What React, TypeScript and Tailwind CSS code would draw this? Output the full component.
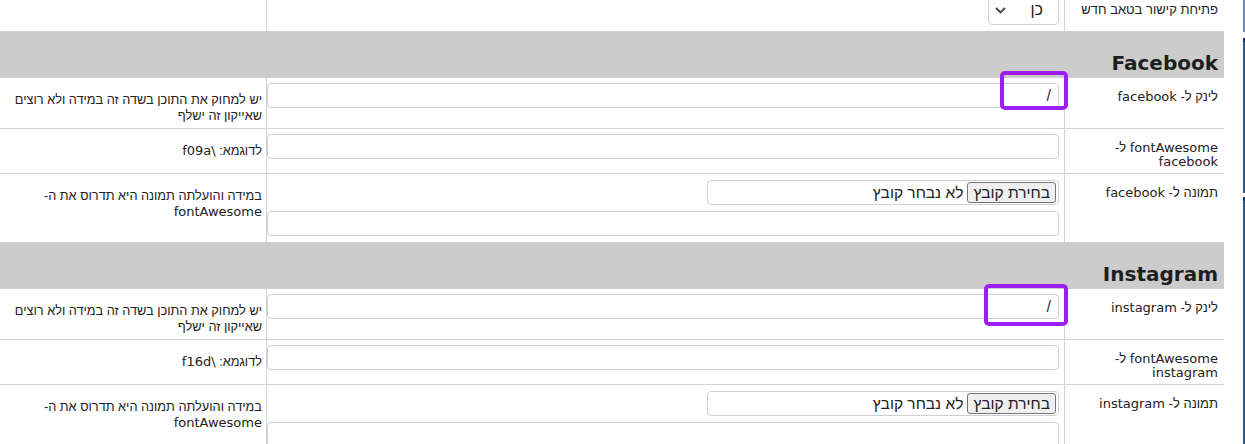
import type { ReactNode } from 'react';

const sections = [
    { title: 'Facebook', name: 'facebook', code: '\\f09a' },
    { title: 'Instagram', name: 'instagram', code: '\\f16d' },
];

function Lat({ children }: { children: ReactNode }) {
    return <span className="font-['DejaVu_Sans',sans-serif] text-[13px]">{children}</span>;
}

function Row({
    height,
    label,
    desc,
    children,
    last,
}: {
    height: string;
    label: ReactNode;
    desc?: ReactNode;
    children?: ReactNode;
    last?: boolean;
}) {
    return (
        <div className={`flex ${height} ${last ? '' : 'border-b border-[#d4d4d4]'}`}>
            <div className="w-[160px] shrink-0 border-l border-[#d4d4d4] pr-[6px] pt-[12px] leading-[14px]">{label}</div>
            <div className="w-[798px] shrink-0 border-l border-[#d4d4d4] pr-[5px] pt-[5px]">{children}</div>
            <div className="w-[266px] shrink-0 pr-[4px] pt-[14px] leading-[16px] text-[12.75px]">{desc}</div>
        </div>
    );
}

function TextInput({ value }: { value?: string }) {
    return (
        <div className="h-[25px] w-full rounded-[4px] border border-[#d0d0d0] px-[7px] flex items-center text-[16px] text-[#333]">
            {value}
        </div>
    );
}

function FileInput() {
    return (
        <div className="w-[352px] h-[25px] rounded-[4px] border border-[#d0d0d0] flex items-center pr-[2px] gap-[4px] text-[15.5px] text-[#222]">
            <div className="h-[21px] px-[5px] flex items-center bg-[#efefef] border border-[#767676] rounded-[3px]">בחירת קובץ</div>
            <span>לא נבחר קובץ</span>
        </div>
    );
}

function Section({ title, name, code }: { title: string; name: string; code: string }) {
    return (
        <div>
            <div className="h-[47px] bg-[#cccccc] pr-[6px] pt-[20px] font-['DejaVu_Sans',sans-serif] font-bold text-[20px] leading-[24px] text-[#1e1e1e]">
                {title}
            </div>
            <Row
                height="h-[51px]"
                label={
                    <>
                        לינק ל- <Lat>{name}</Lat>
                    </>
                }
                desc={
                    <>
                        יש למחוק את התוכן בשדה זה במידה ולא רוצים
                        <br />
                        שאייקון זה ישלף
                    </>
                }
            >
                <TextInput value="/" />
            </Row>
            <Row
                height="h-[45px]"
                label={
                    <>
                        <Lat>fontAwesome</Lat> ל-
                        <br />
                        <Lat>{name}</Lat>
                    </>
                }
                desc={
                    <>
                        לדוגמא: <Lat>{code}</Lat>
                    </>
                }
            >
                <TextInput />
            </Row>
            <Row
                height="h-[68px]"
                last
                label={
                    <>
                        תמונה ל- <Lat>{name}</Lat>
                    </>
                }
                desc={
                    <>
                        במידה והועלתה תמונה היא תדרוס את ה-
                        <br />
                        <Lat>fontAwesome</Lat>
                    </>
                }
            >
                <div className="flex flex-col gap-[6px] pt-px">
                    <FileInput />
                    <TextInput />
                </div>
            </Row>
        </div>
    );
}

export default function App() {
    return (
        <div className="relative w-[1245px] h-[444px] overflow-hidden bg-white flex text-[#222] text-[13px] font-['Liberation_Sans',sans-serif]">
            <div dir="rtl" className="w-[1224px] shrink-0">
                {/* last row of the previous block, cut by the top edge */}
                <div className="flex h-[40px] -mt-[9px]">
                    <div className="w-[160px] shrink-0 border-l border-[#d4d4d4] pr-[6px] pt-[12px] leading-[14px]">
                        פתיחת קישור בטאב חדש
                    </div>
                    <div className="w-[798px] shrink-0 border-l border-[#d4d4d4] pr-[5px] pt-[4px]">
                        <div className="w-[71px] h-[30px] rounded-[4px] border border-[#d0d0d0] flex items-center justify-between pr-[15px] pl-[6px]">
                            <span className="text-[16px]">כן</span>
                            <svg width="11" height="7" viewBox="0 0 11 7" fill="none">
                                <path d="M1 1l4.5 4.5L10 1" stroke="#444" strokeWidth="1.8" />
                            </svg>
                        </div>
                    </div>
                    <div className="w-[266px] shrink-0" />
                </div>
                {sections.map((s) => (
                    <Section key={s.name} {...s} />
                ))}
            </div>
            <div className="flex-1 flex justify-end">
                <div className="w-[2px] h-full flex flex-col">
                    <div className="h-[32px] bg-[#6b8fc4]" />
                    <div className="h-[6px]" />
                    <div className="h-[155px] bg-[#2d5a96] border-t-[4px] border-[#163a6e]" />
                    <div className="h-[4px]" />
                    <div className="flex-1 bg-[#2d5a96] border-t-[4px] border-[#163a6e]" />
                </div>
            </div>
            {/* highlight marks */}
            <div className="absolute left-[1000px] top-[71px] w-[68px] h-[39px] border-[4px] border-[#9b1ff0] rounded-[5px]" />
            <div className="absolute left-[984px] top-[284px] w-[84px] h-[42px] border-[4px] border-[#9b1ff0] rounded-[5px]" />
        </div>
    );
}
